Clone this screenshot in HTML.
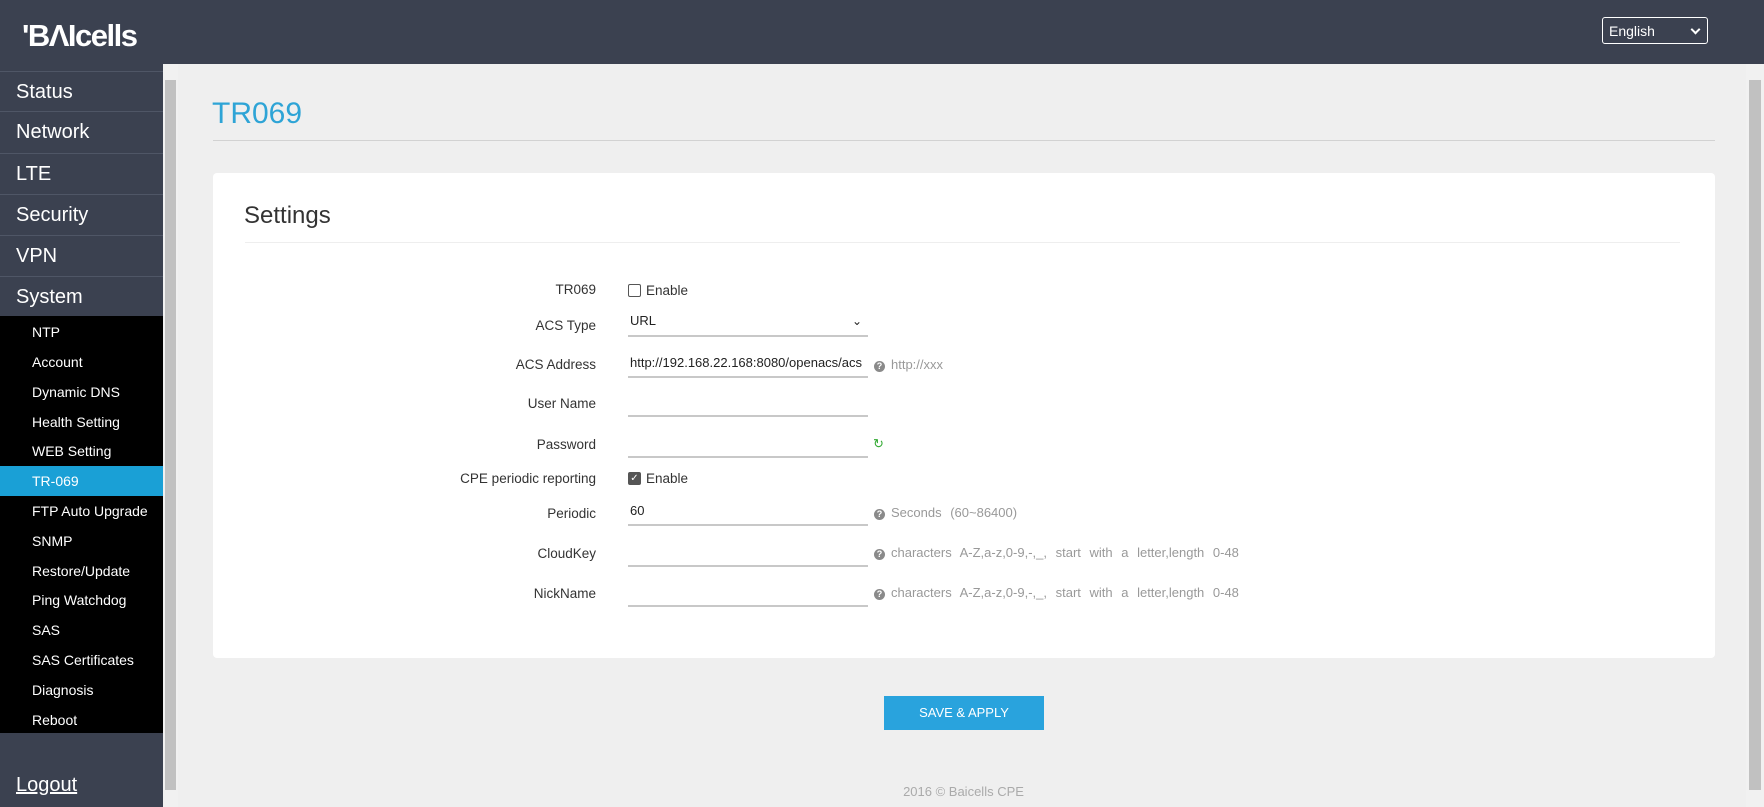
<!DOCTYPE html>
<html><head><meta charset="utf-8"><style>
*{box-sizing:border-box;margin:0;padding:0}
body{width:1764px;height:807px;overflow:hidden;background:#efefef;font-family:"Liberation Sans",sans-serif;position:relative}
.hdr{position:absolute;left:0;top:0;width:1764px;height:64px;background:#3b4150}
.logo{position:absolute;left:22px;top:18px;color:#fff;font-weight:bold;font-size:31px;letter-spacing:-1.5px}
.lang{position:absolute;left:1602px;top:17px;width:106px;height:27px;border:1px solid #fff;border-radius:3px;color:#fff;font-size:14px;padding:5px 6px}
.lang:after{content:"";position:absolute;right:8px;top:8px;width:5px;height:5px;border-right:2px solid #fff;border-bottom:2px solid #fff;transform:rotate(45deg)}
.side{position:absolute;left:0;top:64px;width:163px;height:743px;background:#3b4150}
.m{position:absolute;left:0;width:163px;height:41px;color:#fff;font-size:20px;padding-left:16px;line-height:40px;border-top:1px solid #4f5666}
.sub{position:absolute;left:0;top:316px;width:163px;height:417px;background:#000}
.s{position:absolute;left:0;width:163px;height:30px;color:#fff;font-size:14px;padding-left:32px;line-height:30px}
.s.a{background:#1aa0d6}
.logout{position:absolute;left:16px;top:774px;color:#fff;font-size:20px;text-decoration:underline}
.sb{position:absolute;left:163px;top:64px;width:15px;height:743px;background:#f1f1f1}
.sb div{position:absolute;left:2px;top:16px;width:11px;height:710px;background:#c1c1c1}
.sb2{position:absolute;left:1746px;top:64px;width:18px;height:743px;background:#f1f1f1}
.sb2 div{position:absolute;left:3px;top:16px;width:12px;height:710px;background:#c1c1c1}
.title{position:absolute;left:212px;top:97px;color:#2ea4d6;font-size:30px}
.hr1{position:absolute;left:213px;top:140px;width:1502px;height:1px;background:#d2d2d2}
.card{position:absolute;left:213px;top:173px;width:1502px;height:485px;background:#fff;border-radius:4px}
.set{position:absolute;left:244px;top:202px;font-size:24px;color:#333}
.hr2{position:absolute;left:245px;top:242px;width:1435px;height:1px;background:#eee}
.lb{position:absolute;width:596px;left:0;text-align:right;font-size:13.5px;color:#333}
.in{position:absolute;left:628px;width:240px;border-bottom:2px solid #c8c8c8;font-size:13px;color:#222;padding-left:2px}
.cb{position:absolute;left:628px;width:13px;height:13px;border:1px solid #555;border-radius:2px}
.ct{position:absolute;left:646px;font-size:13.5px;color:#333}
.hl{position:absolute;left:874px;font-size:13px;color:#999;word-spacing:5px}
.q{display:inline-block;width:11px;height:11px;border-radius:50%;background:#8a8a8a;color:#fff;font-size:9px;text-align:center;line-height:11px;font-weight:bold;margin-right:6px;vertical-align:0;word-spacing:0}
.btn{position:absolute;left:884px;top:696px;width:160px;height:34px;background:#29a3dd;color:#fff;font-size:13px;text-align:center;line-height:34px}
.ft{position:absolute;left:0;width:1764px;padding-left:163px;text-align:center;top:784px;font-size:13px;color:#aaa}
</style></head><body>
<div class="hdr"><div class="logo">'BΛIcells</div><div class="lang">English</div></div>
<div class="side">
<div class="m" style="top:7px">Status</div>
<div class="m" style="top:47px">Network</div>
<div class="m" style="top:89px">LTE</div>
<div class="m" style="top:130px">Security</div>
<div class="m" style="top:171px">VPN</div>
<div class="m" style="top:212px">System</div>
</div>
<div class="sub">
<div class="s" style="top:1px">NTP</div>
<div class="s" style="top:31px">Account</div>
<div class="s" style="top:61px">Dynamic DNS</div>
<div class="s" style="top:91px">Health Setting</div>
<div class="s" style="top:120px">WEB Setting</div>
<div class="s a" style="top:150px">TR-069</div>
<div class="s" style="top:180px">FTP Auto Upgrade</div>
<div class="s" style="top:210px">SNMP</div>
<div class="s" style="top:240px">Restore/Update</div>
<div class="s" style="top:269px">Ping Watchdog</div>
<div class="s" style="top:299px">SAS</div>
<div class="s" style="top:329px">SAS Certificates</div>
<div class="s" style="top:359px">Diagnosis</div>
<div class="s" style="top:389px">Reboot</div>
</div>
<div class="logout">Logout</div>
<div class="sb"><div></div></div>
<div class="sb2"><div></div></div>
<div class="title">TR069</div>
<div class="hr1"></div>
<div class="card"></div>
<div class="set">Settings</div>
<div class="hr2"></div>

<div class="lb" style="top:282px">TR069</div>
<div class="cb" style="top:284px"></div><div class="ct" style="top:283px">Enable</div>

<div class="lb" style="top:318px">ACS Type</div>
<div class="in" style="top:313px;height:24px">URL<span style="position:absolute;right:6px;top:1px;font-size:12px">&#8964;</span></div>

<div class="lb" style="top:357px">ACS Address</div>
<div class="in" style="top:355px;height:23px">http://192.168.22.168:8080/openacs/acs</div>
<div class="hl" style="top:357px"><span class="q">?</span>http://xxx</div>

<div class="lb" style="top:396px">User Name</div>
<div class="in" style="top:395px;height:22px"></div>

<div class="lb" style="top:437px">Password</div>
<div class="in" style="top:436px;height:22px"></div>
<div style="position:absolute;left:873px;top:436px;color:#3a3;font-size:13px">&#8635;</div>

<div class="lb" style="top:471px">CPE periodic reporting</div>
<div class="cb" style="top:472px;background:#555;color:#fff;font-size:10px;line-height:11px;text-align:center">&#10003;</div><div class="ct" style="top:471px">Enable</div>

<div class="lb" style="top:506px">Periodic</div>
<div class="in" style="top:503px;height:23px">60</div>
<div class="hl" style="top:505px"><span class="q">?</span>Seconds (60~86400)</div>

<div class="lb" style="top:546px">CloudKey</div>
<div class="in" style="top:545px;height:22px"></div>
<div class="hl" style="top:545px"><span class="q">?</span>characters A-Z,a-z,0-9,-,_, start with a letter,length 0-48</div>

<div class="lb" style="top:586px">NickName</div>
<div class="in" style="top:585px;height:22px"></div>
<div class="hl" style="top:585px"><span class="q">?</span>characters A-Z,a-z,0-9,-,_, start with a letter,length 0-48</div>

<div class="btn">SAVE &amp; APPLY</div>
<div class="ft">2016 © Baicells CPE</div>
</body></html>
